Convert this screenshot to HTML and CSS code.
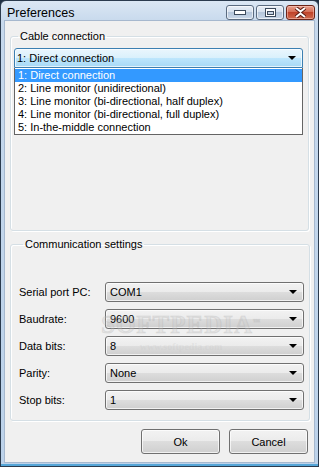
FILE: index.html
```html
<!DOCTYPE html>
<html lang="en">
<head>
    <meta charset="UTF-8">
    <title>Preferences</title>
    <link rel="stylesheet" href="styles.css">
</head>
<body>
    <div class="window">
        <div class="titlebar">
            <span class="title">Preferences</span>
            <div class="caption-buttons">
                <div class="cap-btn">
                    <svg width="12" height="6" viewBox="0 0 12 6"><rect x="0.5" y="0.5" width="11" height="4" fill="#fff" stroke="#3c4a5c"/></svg>
                </div>
                <div class="cap-btn">
                    <svg width="11" height="9" viewBox="0 0 11 9"><rect x="0.5" y="0.5" width="10" height="8" fill="#fff" stroke="#3c4a5c"/><rect x="2.5" y="3.5" width="6" height="3" fill="#c9d6e6" stroke="#3c4a5c"/></svg>
                </div>
                <div class="cap-btn close">
                    <svg width="15" height="11" viewBox="0 0 15 11"><path d="M3 1 L7.5 4.5 L12 1 M3 10 L7.5 6.5 L12 10" stroke="#5a1a12" stroke-width="4" fill="none"/><path d="M3 1 L7.5 4.5 L12 1 M3 10 L7.5 6.5 L12 10" stroke="#fff" stroke-width="2" fill="none"/></svg>
                </div>
            </div>
        </div>

        <div class="client">
            <fieldset class="group cable">
                <legend>Cable connection</legend>
                <div class="combo focused">
                    <span>1: Direct connection</span>
                    <span class="arrow"></span>
                </div>
                <ul class="droplist">
                    <li class="selected">1: Direct connection</li>
                    <li>2: Line monitor (unidirectional)</li>
                    <li>3: Line monitor (bi-directional, half duplex)</li>
                    <li>4: Line monitor (bi-directional, full duplex)</li>
                    <li>5: In-the-middle connection</li>
                </ul>
            </fieldset>

            <fieldset class="group comm">
                <legend>Communication settings</legend>
                <div class="settings">
                    <label>Serial port PC:</label>
                    <div class="combo"><span>COM1</span><span class="arrow"></span></div>
                    <label>Baudrate:</label>
                    <div class="combo"><span>9600</span><span class="arrow"></span></div>
                    <label>Data bits:</label>
                    <div class="combo"><span>8</span><span class="arrow"></span></div>
                    <label>Parity:</label>
                    <div class="combo"><span>None</span><span class="arrow"></span></div>
                    <label>Stop bits:</label>
                    <div class="combo"><span>1</span><span class="arrow"></span></div>
                </div>
            </fieldset>

            <div class="actions">
                <button class="btn">Ok</button>
                <button class="btn">Cancel</button>
            </div>
        </div>

        <div class="watermark">
            <span class="wm-big">SOFTPEDIA<sup>™</sup></span>
            <span class="wm-small">www.softpedia.com</span>
        </div>
    </div>
</body>
</html>
```

FILE: styles.css
```css
* {
    margin: 0;
    padding: 0;
    box-sizing: border-box;
}

body {
    font-family: "Liberation Sans", Arial, sans-serif;
    font-size: 11px;
    color: #000;
    background: #1f3044;
}

.window {
    position: relative;
    width: 319px;
    height: 467px;
    border: 1px solid #2b3b4e;
    border-radius: 6px 6px 0 0;
    background: linear-gradient(#dbe7f4 0, #c6d8ec 22px, #bcd2ea 100%);
    padding: 0 3px 3px 3px;
    display: flex;
    flex-direction: column;
    box-shadow: inset 0 -2px 0 #55a6d8;
}

.titlebar {
    height: 22px;
    display: flex;
    align-items: center;
    justify-content: space-between;
    padding-left: 3px;
}

.title {
    font-size: 12.5px;
    color: #000;
    margin-top: 5px;
}

.caption-buttons {
    display: flex;
    gap: 2px;
    align-self: flex-start;
    margin-top: 4px;
}

.cap-btn {
    width: 28px;
    height: 15px;
    border: 1px solid #5a6b80;
    border-radius: 3px;
    background: linear-gradient(#e8eef6 0%, #d5e0ee 45%, #b5c6db 50%, #c9d7e8 100%);
    display: flex;
    align-items: center;
    justify-content: center;
    box-shadow: inset 0 0 0 1px rgba(255, 255, 255, 0.6);
}

.cap-btn.close {
    width: 29px;
    border-color: #6b2418;
    background: linear-gradient(#e8a08e 0%, #d56e56 45%, #c0432a 50%, #cf6a4e 100%);
    box-shadow: inset 0 0 0 1px rgba(255, 210, 200, 0.5);
}

.client {
    flex: 1;
    background: #f0f0f0;
    border: 1px solid #a6b8ce;
    padding: 9px 5px 8px 5px;
    display: flex;
    flex-direction: column;
}

.group {
    border: 1px solid #d5dfe5;
    border-radius: 3px;
    box-shadow: inset 1px 1px 0 #fff, 1px 1px 0 #fff;
    padding: 0 5px 0 3px;
}

.group legend {
    margin-left: 4px;
    padding: 0 2px 0 2px;
    line-height: 13px;
}

.cable {
    height: 201px;
    padding-top: 5px;
}

.comm {
    margin-top: 7px;
    height: 183px;
    padding-top: 31px;
    padding-left: 8px;
}

.combo {
    height: 20px;
    border: 1px solid #707070;
    border-radius: 3px;
    background: linear-gradient(#f2f2f2 0%, #ebebeb 50%, #dddddd 50%, #cfcfcf 100%);
    display: flex;
    align-items: center;
    justify-content: space-between;
    padding: 0 4px 0 4px;
    box-shadow: inset 0 0 0 1px rgba(255, 255, 255, 0.7);
}

.combo.focused {
    border-color: #3c7fb1;
    background: linear-gradient(#eaf6fd 0%, #d9f0fc 50%, #bee6fd 50%, #a7d9f5 100%);
    border-radius: 3px 3px 0 0;
    padding-left: 2px;
}

.arrow {
    width: 0;
    height: 0;
    border-left: 4px solid transparent;
    border-right: 4px solid transparent;
    border-top: 4px solid #000;
    margin-right: 2px;
}

.droplist {
    list-style: none;
    background: #fff;
    border: 1px solid #646464;
    border-top: none;
    padding-top: 1px;
}

.droplist li {
    height: 13px;
    line-height: 13px;
    padding-left: 3px;
}

.droplist li.selected {
    background: #3399ff;
    color: #fff;
}

.settings {
    display: grid;
    grid-template-columns: 86px 199px;
    grid-auto-rows: 20px;
    row-gap: 7px;
    align-items: center;
}

.settings label {
    line-height: 20px;
}

.actions {
    display: flex;
    justify-content: flex-end;
    gap: 9px;
    margin-top: 8px;
    padding-right: 1px;
}

.btn {
    width: 79px;
    height: 25px;
    font-family: inherit;
    font-size: 11px;
    border: 1px solid #707070;
    border-radius: 3px;
    background: linear-gradient(#f2f2f2 0%, #ebebeb 50%, #dddddd 50%, #cfcfcf 100%);
    box-shadow: inset 0 0 0 1px rgba(255, 255, 255, 0.7);
    color: #000;
}

.watermark {
    position: absolute;
    left: 100px;
    top: 310px;
    display: flex;
    flex-direction: column;
    align-items: center;
    color: rgba(200, 200, 200, 0.3);
    pointer-events: none;
}

.wm-big {
    font-family: "Liberation Serif", serif;
    font-size: 25px;
    font-weight: bold;
    letter-spacing: 1px;
    -webkit-text-stroke: 1px rgba(160, 160, 160, 0.2);
}

.wm-big sup {
    font-size: 7px;
}

.wm-small {
    font-family: "Liberation Serif", serif;
    font-size: 10px;
    font-weight: bold;
    margin-top: 2px;
}
```
